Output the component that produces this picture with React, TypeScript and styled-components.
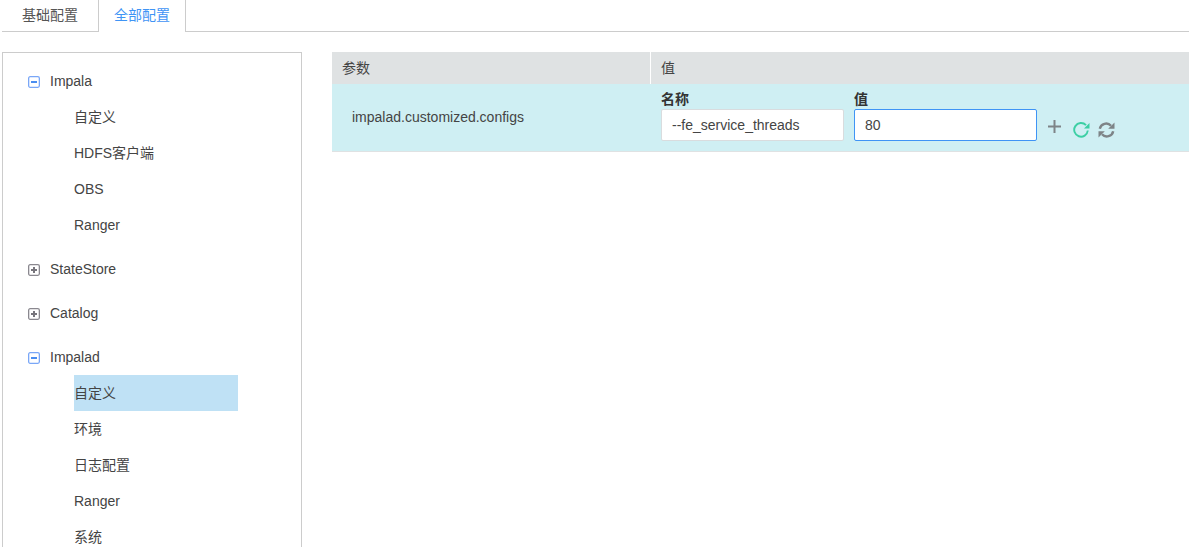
import React from 'react';
import styled, { createGlobalStyle } from 'styled-components';

const GlobalStyle = createGlobalStyle`
  html, body {
    margin: 0;
    padding: 0;
    height: 100%;
    overflow: hidden;
    background: #fff;
  }
  body {
    font-family: "Liberation Sans", "Noto Sans CJK SC", sans-serif;
    font-size: 14px;
    color: #333;
  }
`;

const treeData = [
  { name: 'Impala', open: true, children: ['自定义', 'HDFS客户端', 'OBS', 'Ranger'] },
  { name: 'StateStore', open: false, children: [] },
  { name: 'Catalog', open: false, children: [] },
  { name: 'Impalad', open: true, children: ['自定义', '环境', '日志配置', 'Ranger', '系统'], selected: 0 },
];

const App = () => {
  return (
    <Page>
      <GlobalStyle />
      <Tabs>
        <Tab>基础配置</Tab>
        <Tab $active>全部配置</Tab>
      </Tabs>
      <Body>
        <TreePanel>
          {treeData.map((node) => (
            <TreeNode key={node.name}>
              <NodeRow>
                <Toggle>
                  <svg width="12" height="12" viewBox="0 0 12 12">
                    <rect x="0.65" y="0.65" width="10.7" height="10.7" rx="1.5" fill="#fff" stroke={node.open ? '#7aa7f7' : '#8a888f'} strokeWidth="1.3" />
                    <rect x="3" y="5" width="6" height="2" fill={node.open ? '#4a8df0' : '#77757c'} />
                    {!node.open && <rect x="5" y="3" width="2" height="6" fill="#77757c" />}
                  </svg>
                </Toggle>
                <NodeName>{node.name}</NodeName>
              </NodeRow>
              {node.children.map((child, i) => (
                <ChildRow key={child} $selected={node.selected === i}>
                  {child}
                </ChildRow>
              ))}
            </TreeNode>
          ))}
        </TreePanel>
        <TableArea>
          <HeadRow>
            <ParamHead>参数</ParamHead>
            <ValueHead>值</ValueHead>
          </HeadRow>
          <DataRow>
            <ParamCell>impalad.customized.configs</ParamCell>
            <ValueCell>
              <Field>
                <FieldLabel>名称</FieldLabel>
                <TextInput defaultValue="--fe_service_threads" />
              </Field>
              <Field>
                <FieldLabel>值</FieldLabel>
                <TextInput $focused defaultValue="80" />
              </Field>
              <Actions>
                <PlusIcon width="13" height="13" viewBox="0 0 13 13">
                  <path d="M5.500 0h2v5.500H13v2H7.500V13h-2V7.500H0v-2h5.500z" fill="#7e8487" />
                </PlusIcon>
                <ReloadIcon width="17" height="16" viewBox="0 0 17 16">
                  <path d="M13 3.200A6.800 6.800 0 1 0 14.800 8.500" fill="none" stroke="#3ccfa4" strokeWidth="1.900" />
                  <path d="M16.500 1V6.500H11z" fill="#3ccfa4" />
                </ReloadIcon>
                <SyncIcon width="17" height="16" viewBox="0 0 17 16">
                  <path d="M1.800 6.800A6.500 6.500 0 0 1 13 3.700" fill="none" stroke="#7e8487" strokeWidth="2.400" />
                  <path d="M16.500 0.500V6.800H10.200z" fill="#7e8487" />
                  <path d="M15.200 9.200A6.500 6.500 0 0 1 4 12.300" fill="none" stroke="#7e8487" strokeWidth="2.400" />
                  <path d="M0.500 15.500V9.200H6.800z" fill="#7e8487" />
                </SyncIcon>
              </Actions>
            </ValueCell>
          </DataRow>
        </TableArea>
      </Body>
    </Page>
  );
};

const Page = styled.div`
  width: 1189px;
  height: 547px;
  overflow: hidden;
`;
const Tabs = styled.div`
  display: flex;
  height: 32px;
  margin-left: 2px;
  box-sizing: border-box;
  border-bottom: 1px solid #ccc;
`;
const Tab = styled.div<{ $active?: boolean }>`
  box-sizing: border-box;
  height: ${({ $active }) => ($active ? '32px' : '31px')};
  padding: 0 ${({ $active }) => ($active ? '15px' : '20px')};
  line-height: 30px;
  color: ${({ $active }) => ($active ? '#3f94f5' : '#555')};
  background: #fff;
  border-right: 1px solid #ccc;
`;
const Body = styled.div`
  display: flex;
  align-items: flex-start;
  padding: 20px 0 0 2px;
`;
const TreePanel = styled.div`
  box-sizing: border-box;
  flex: none;
  width: 300px;
  height: 520px;
  border: 1px solid #ccc;
  padding: 10px 0 0 25px;
`;
const TreeNode = styled.div`
  margin-bottom: 8px;
`;
const NodeRow = styled.div`
  display: flex;
  align-items: center;
  height: 36px;
`;
const Toggle = styled.span`
  display: flex;
  width: 22px;
  flex: none;
  margin-top: 2px;
`;
const NodeName = styled.span`
  color: #444;
`;
const ChildRow = styled.div<{ $selected?: boolean }>`
  box-sizing: border-box;
  width: 164px;
  height: 36px;
  margin-left: 46px;
  line-height: 36px;
  color: #444;
  background: ${({ $selected }) => ($selected ? '#bfe1f5' : 'transparent')};
`;
const TableArea = styled.div`
  flex: 1;
  margin-left: 30px;
`;
const HeadRow = styled.div`
  display: flex;
  height: 32px;
  background: #dfe2e3;
  line-height: 32px;
  color: #444;
`;
const ParamHead = styled.div`
  box-sizing: border-box;
  width: 319px;
  padding-left: 10px;
  border-right: 1px solid #fff;
`;
const ValueHead = styled.div`
  padding-left: 10px;
`;
const DataRow = styled.div`
  display: flex;
  box-sizing: border-box;
  height: 68px;
  background: #cfeff3;
  border-bottom: 1px solid #dfe2e3;
`;
const ParamCell = styled.div`
  box-sizing: border-box;
  width: 319px;
  padding: 25px 0 0 20px;
  color: #444;
`;
const ValueCell = styled.div`
  display: flex;
  gap: 10px;
  padding: 8px 0 0 10px;
`;
const Field = styled.div`
  display: flex;
  flex-direction: column;
  width: 183px;
`;
const FieldLabel = styled.label`
  height: 17px;
  line-height: 15px;
  font-weight: bold;
  font-size: 14px;
  color: #333;
`;
const TextInput = styled.input<{ $focused?: boolean }>`
  box-sizing: border-box;
  width: 183px;
  height: 32px;
  padding: 0 10px;
  border: 1px solid ${({ $focused }) => ($focused ? '#3f94f5' : '#d9dcde')};
  border-radius: 2px;
  background: #fff;
  font: inherit;
  color: #444;
  outline: none;
`;
const Actions = styled.div`
  display: flex;
  align-items: flex-start;
  margin: 28px 0 0 1px;
`;
const PlusIcon = styled.svg`
  flex: none;
`;
const ReloadIcon = styled.svg`
  flex: none;
  margin: 2px 0 0 12px;
`;
const SyncIcon = styled.svg`
  flex: none;
  margin: 2px 0 0 8px;
`;

export default App;
